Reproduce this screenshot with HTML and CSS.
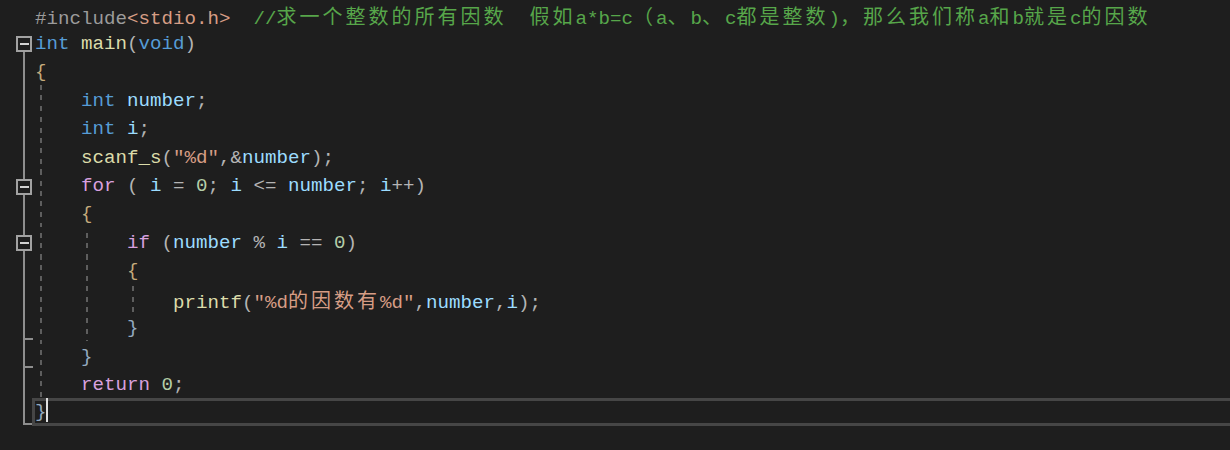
FILE: index.html
```html
<!DOCTYPE html>
<html lang="zh">
<head>
<meta charset="utf-8">
<title>main.c</title>
<link rel="stylesheet" href="styles.css">
</head>
<body>
<div class="editor">
  <div class="row"><div class="gut"></div><div class="code"><span class="p">#include</span><span class="s">&lt;stdio.h&gt;</span>  <span class="m">//<span class="cj">求一个整数的所有因数</span>  <span class="cj">假如</span>a*b=c<span class="cj">（</span>a<span class="cj">、</span>b<span class="cj">、</span>c<span class="cj">都是整数</span>)<span class="cj">，那么我们称</span>a<span class="cj">和</span>b<span class="cj">就是</span>c<span class="cj">的因数</span></span></div></div>
  <div class="row"><div class="gut box-top"><span class="fold"></span></div><div class="code"><span class="k">int</span> <span class="f">main</span><span class="o">(</span><span class="k">void</span><span class="o">)</span></div></div>
  <div class="row"><div class="gut v"></div><div class="code"><span class="bo">{</span></div></div>
  <div class="row"><div class="gut v"></div><div class="code g1">    <span class="k">int</span> <span class="v">number</span><span class="o">;</span></div></div>
  <div class="row"><div class="gut v"></div><div class="code g1">    <span class="k">int</span> <span class="v">i</span><span class="o">;</span></div></div>
  <div class="row"><div class="gut v"></div><div class="code g1">    <span class="f">scanf_s</span><span class="o">(</span><span class="s">"%d"</span><span class="o">,&amp;</span><span class="v">number</span><span class="o">);</span></div></div>
  <div class="row"><div class="gut v"><span class="fold"></span></div><div class="code g1">    <span class="c">for</span> <span class="o">(</span> <span class="v">i</span> <span class="o">=</span> <span class="n">0</span><span class="o">;</span> <span class="v">i</span> <span class="o">&lt;=</span> <span class="v">number</span><span class="o">;</span> <span class="v">i</span><span class="o">++)</span></div></div>
  <div class="row"><div class="gut v"></div><div class="code g1">    <span class="bo">{</span></div></div>
  <div class="row"><div class="gut v"><span class="fold"></span></div><div class="code g2">        <span class="c">if</span> <span class="o">(</span><span class="v">number</span> <span class="o">%</span> <span class="v">i</span> <span class="o">==</span> <span class="n">0</span><span class="o">)</span></div></div>
  <div class="row"><div class="gut v"></div><div class="code g2">        <span class="bo">{</span></div></div>
  <div class="row"><div class="gut v"></div><div class="code g3">            <span class="f">printf</span><span class="o">(</span><span class="s">"%d<span class="cj">的因数有</span>%d"</span><span class="o">,</span><span class="v">number</span><span class="o">,</span><span class="v">i</span><span class="o">);</span></div></div>
  <div class="row"><div class="gut v tick"></div><div class="code g2">        <span class="bc">}</span></div></div>
  <div class="row"><div class="gut v tick"></div><div class="code g1">    <span class="bc">}</span></div></div>
  <div class="row"><div class="gut v"></div><div class="code g1">    <span class="c">return</span> <span class="n">0</span><span class="o">;</span></div></div>
  <div class="row cur"><div class="gut end"></div><div class="code"><span class="bc">}</span><span class="caret"></span></div></div>
</div>
</body>
</html>
```

FILE: styles.css
```css
html, body {
  margin: 0;
  padding: 0;
  background: #1e1e1e;
  overflow: hidden;
}

body {
  width: 1230px;
  height: 450px;
}

.editor {
  --ol: #8e8e8e;
  --dash: repeating-linear-gradient(to bottom, #5e5e5e 0 5px, transparent 5px 10.6px);
  display: flex;
  flex-direction: column;
  font-family: "Liberation Mono", "Noto Sans CJK SC", monospace;
  font-size: 19.17px;
  line-height: 28.43px;
  color: #dcdcdc;
}

.row {
  display: flex;
  height: 28.43px;
}

.gut {
  width: 35px;
  flex: none;
  display: flex;
  align-items: flex-start;
}

.gut.v {
  background: linear-gradient(var(--ol), var(--ol)) 23px 0 / 2px 100% no-repeat;
}

.gut.box-top {
  background: linear-gradient(var(--ol), var(--ol)) 23px 100% / 2px 6px no-repeat;
}

.gut.tick {
  background:
    linear-gradient(var(--ol), var(--ol)) 23px calc(100% - 1px) / 10px 2px no-repeat,
    linear-gradient(var(--ol), var(--ol)) 23px 0 / 2px 100% no-repeat;
}

.gut.end {
  background:
    linear-gradient(var(--ol), var(--ol)) 23px calc(100% - 1px) / 10px 2px no-repeat,
    linear-gradient(var(--ol), var(--ol)) 23px 0 / 2px calc(100% - 1px) no-repeat;
}

.fold {
  width: 16px;
  height: 16px;
  box-sizing: border-box;
  margin: 8px 0 0 16px;
  border: 2px solid #a2a2a2;
  background: #1e1e1e linear-gradient(#d2d2d2, #d2d2d2) 2px 5px / 9px 2px no-repeat;
}

.code {
  flex: 1;
  white-space: pre;
  padding-top: 1.5px;
  box-sizing: border-box;
}

.g1, .g2, .g3 {
  background-repeat: no-repeat;
  background-attachment: fixed;
}

.g1 {
  background-image: var(--dash);
  background-size: 2px 100%;
  background-position: 40px 0;
}

.g2 {
  background-image: var(--dash), var(--dash);
  background-size: 2px 100%, 2px 100%;
  background-position: 40px 0, 86px 0;
}

.g3 {
  background-image: var(--dash), var(--dash), var(--dash);
  background-size: 2px 100%, 2px 100%, 2px 100%;
  background-position: 40px 0, 86px 0, 132px 0;
}

.cur .code {
  margin-left: -3px;
  padding-left: 3px;
  padding-top: 0;
  margin-right: -20px;
  box-shadow: inset 0 0 0 3px #464646;
}

.caret {
  display: inline-block;
  width: 2px;
  height: 24px;
  margin-left: -1px;
  vertical-align: -5.5px;
  background: #e0e0e0;
}

.cj {
  font-family: "Noto Sans CJK SC", sans-serif;
  font-size: 20px;
  letter-spacing: 3px;
}

.p { color: #9b9b9b; }
.s { color: #d69d85; }
.m { color: #57a64a; }
.k { color: #569cd6; }
.c { color: #d8a0df; }
.f { color: #dcdcaa; }
.v { color: #9cdcfe; }
.n { color: #b5cea8; }
.o { color: #b4b4b4; }
.bo { color: #c4ab7c; }
.bc { color: #93a9c0; }
```
